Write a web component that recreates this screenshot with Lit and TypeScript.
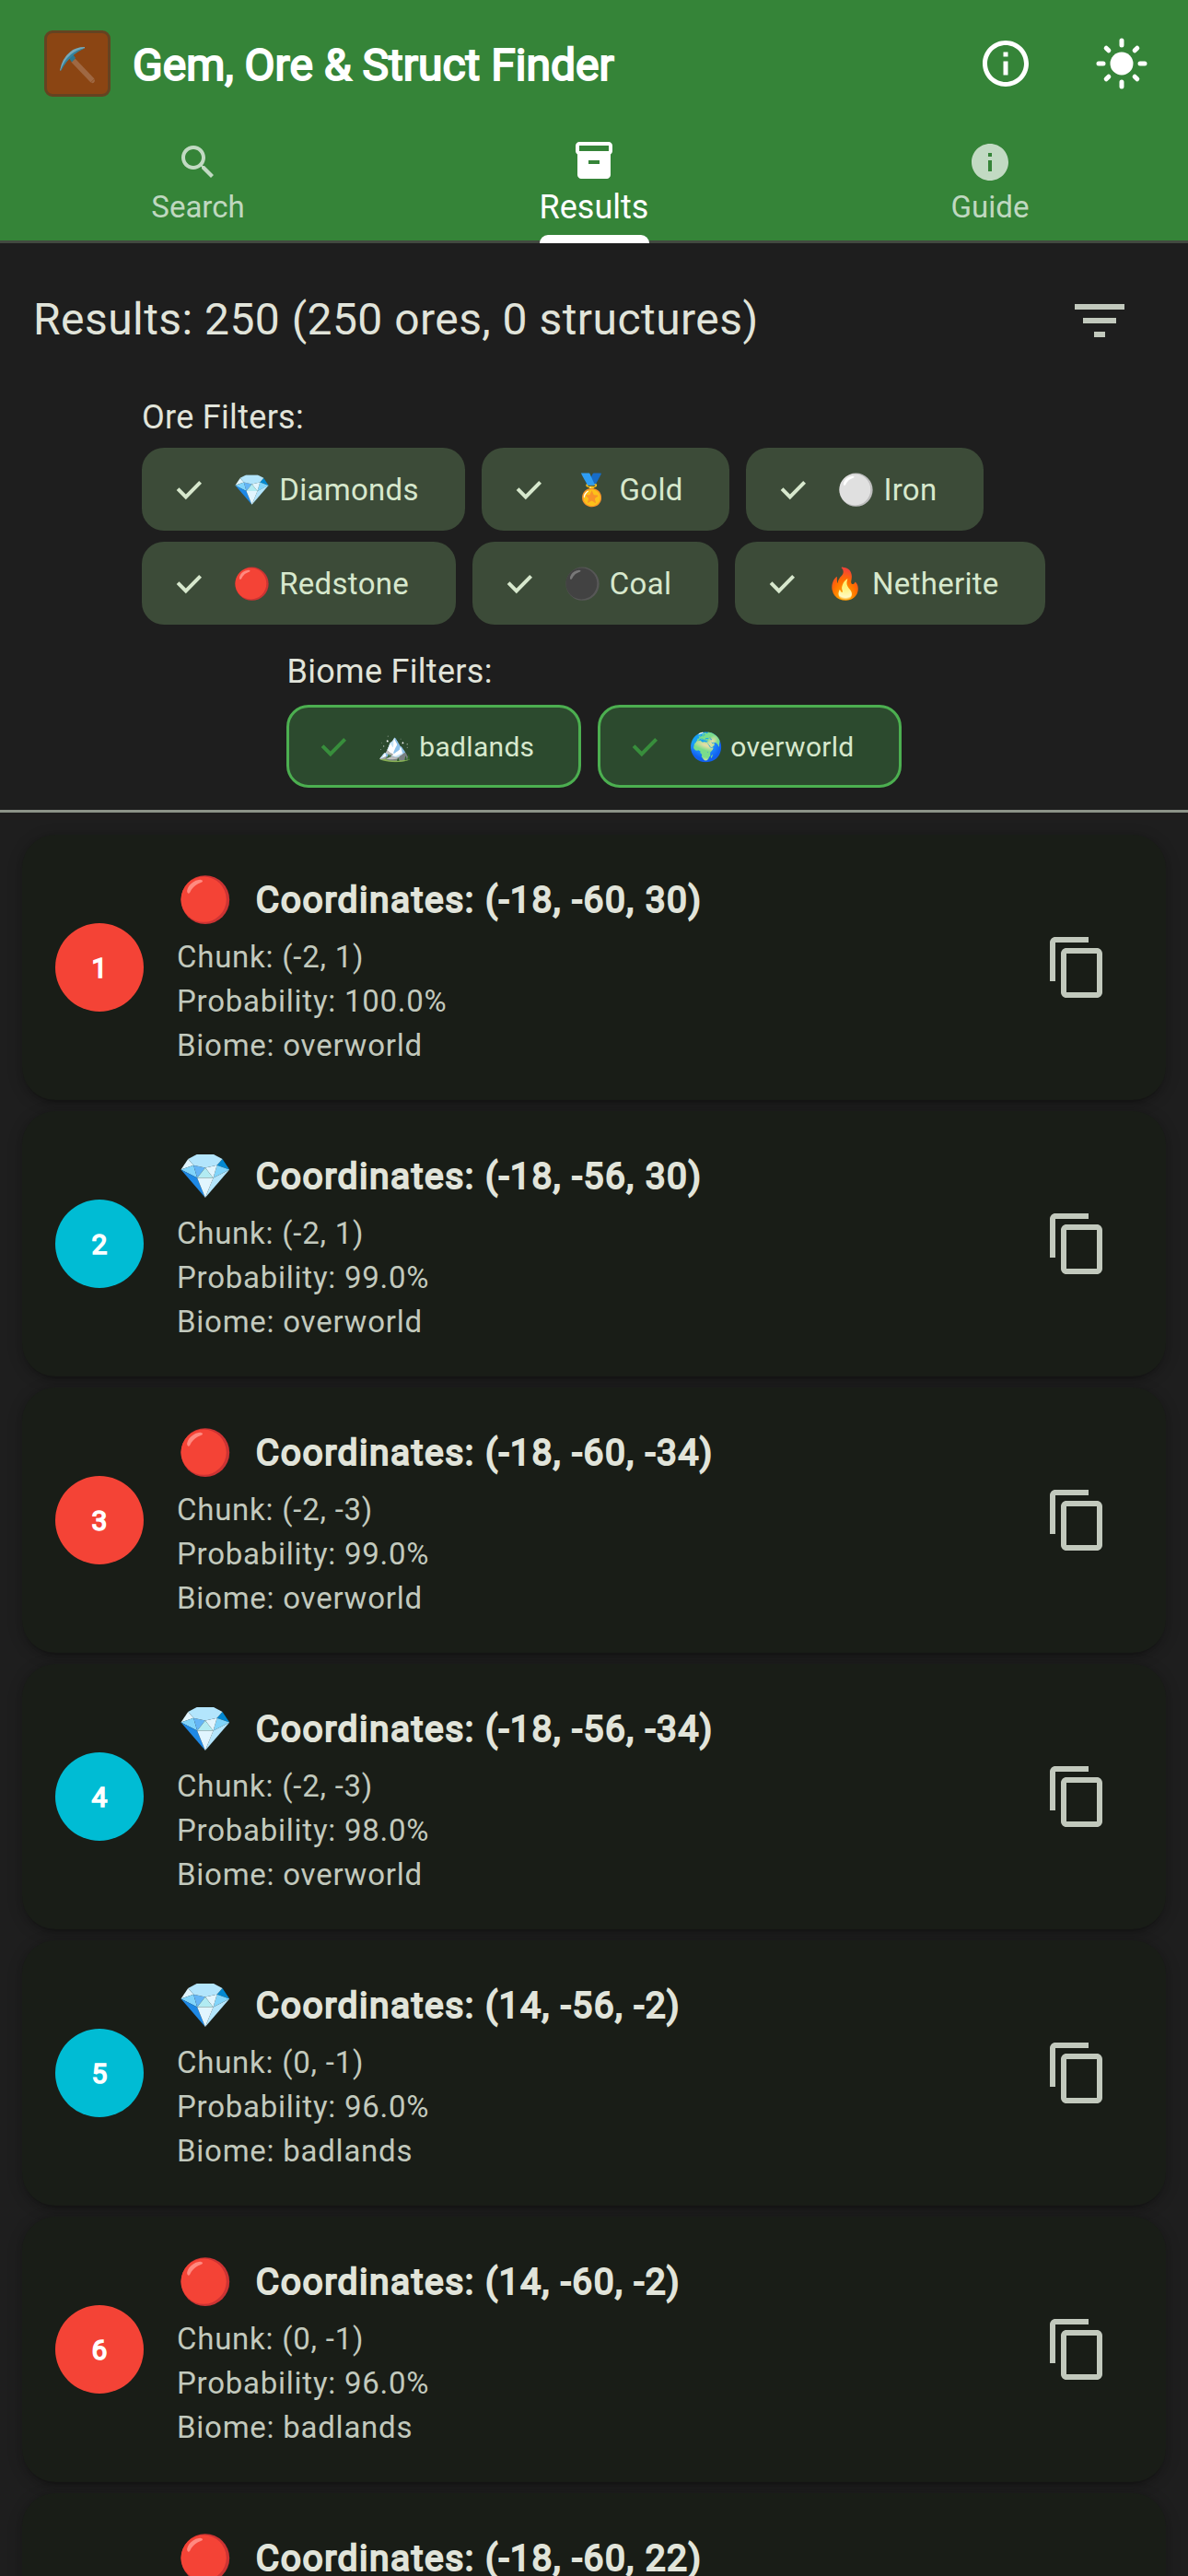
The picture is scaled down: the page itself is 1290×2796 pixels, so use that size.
import { LitElement, html, css, svg } from "lit";
import { customElement, property } from "lit/decorators.js";

interface Chip { emoji: string; label: string; }
interface Ore { n: number; kind: "redstone" | "diamond"; at: string; chunk: string; probability: string; biome: string; }

const ORES: Chip[] = [
  { emoji: "💎", label: "Diamonds" },
  { emoji: "🏅", label: "Gold" },
  { emoji: "⚪", label: "Iron" },
  { emoji: "🔴", label: "Redstone" },
  { emoji: "⚫", label: "Coal" },
  { emoji: "🔥", label: "Netherite" },
];
const BIOMES: Chip[] = [
  { emoji: "🏔️", label: "badlands" },
  { emoji: "🌍", label: "overworld" },
];
const RESULTS: Ore[] = [
  { n: 1, kind: "redstone", at: "(-18, -60, 30)", chunk: "(-2, 1)", probability: "100.0%", biome: "overworld" },
  { n: 2, kind: "diamond", at: "(-18, -56, 30)", chunk: "(-2, 1)", probability: "99.0%", biome: "overworld" },
  { n: 3, kind: "redstone", at: "(-18, -60, -34)", chunk: "(-2, -3)", probability: "99.0%", biome: "overworld" },
  { n: 4, kind: "diamond", at: "(-18, -56, -34)", chunk: "(-2, -3)", probability: "98.0%", biome: "overworld" },
  { n: 5, kind: "diamond", at: "(14, -56, -2)", chunk: "(0, -1)", probability: "96.0%", biome: "badlands" },
  { n: 6, kind: "redstone", at: "(14, -60, -2)", chunk: "(0, -1)", probability: "96.0%", biome: "badlands" },
  { n: 7, kind: "redstone", at: "(-18, -60, 22)", chunk: "(-2, 1)", probability: "96.0%", biome: "overworld" },
];

const ICONS = {
  search: svg`<path d="M15.5 14h-.79l-.28-.27C15.41 12.59 16 11.11 16 9.5 16 5.91 13.09 3 9.5 3S3 5.91 3 9.5 5.91 16 9.5 16c1.61 0 3.09-.59 4.23-1.57l.27.28v.79l5 4.99L20.49 19l-4.99-5zm-6 0C7.01 14 5 11.99 5 9.5S7.01 5 9.5 5 14 7.01 14 9.5 11.99 14 9.5 14z"/>`,
  results: svg`<path d="M20 2H4c-1 0-2 .9-2 2v3.01c0 .72.43 1.34 1 1.69V20c0 1.1 1.1 2 2 2h14c.9 0 2-.9 2-2V8.7c.57-.35 1-.97 1-1.69V4c0-1.1-1-2-2-2zm-5 12H9v-2h6v2zm5-7H4V4h16v3z"/>`,
  guide: svg`<path d="M12 2C6.48 2 2 6.48 2 12s4.48 10 10 10 10-4.48 10-10S17.52 2 12 2zm1 15h-2v-6h2v6zm0-8h-2V7h2v2z"/>`,
  info: svg`<path d="M11 7h2v2h-2zm0 4h2v6h-2zm1-9C6.48 2 2 6.48 2 12s4.48 10 10 10 10-4.48 10-10S17.52 2 12 2zm0 18c-4.41 0-8-3.59-8-8s3.59-8 8-8 8 3.59 8 8-3.59 8-8 8z"/>`,
  sun: svg`<circle cx="12" cy="12" r="5"/><path fill="none" stroke="currentColor" stroke-width="2" stroke-linecap="round" d="M2 12h2M20 12h2M12 2v2M12 20v2M5.28 5.28l1.06 1.06M17.66 17.66l1.06 1.06M18.72 5.28l-1.06 1.06M6.34 17.66l-1.06 1.06"/>`,
  filter: svg`<path d="M10 18h4v-2h-4v2zM3 6v2h18V6H3zm3 7h12v-2H6v2z"/>`,
  copy: svg`<path d="M16 1H4c-1.1 0-2 .9-2 2v14h2V3h12V1zm3 4H8c-1.1 0-2 .9-2 2v14c0 1.1.9 2 2 2h11c1.1 0 2-.9 2-2V7c0-1.1-.9-2-2-2zm0 16H8V7h11v14z"/>`,
};
const icon = (name: keyof typeof ICONS, cls: string) =>
  html`<svg class="icon ${cls}" viewBox="0 0 24 24" fill="currentColor">${ICONS[name]}</svg>`;

const iconStyles = css`
  .icon { display: block; flex: none; }
`;

@customElement("filter-chip")
class FilterChip extends LitElement {
  @property() emoji = "";
  @property() label = "";
  @property({ type: Boolean, reflect: true }) outlined = false;
  static styles = css`
    :host {
      box-sizing: border-box; display: flex; align-items: center; height: 90px; padding: 0 50.5px 0 36px;
      border-radius: 24px; background: #3c4b38; color: #d7e8cd; font-size: 33px; letter-spacing: 0.3px; white-space: pre;
    }
    :host([outlined]) { border: 3px solid #4caf50; background: #2c4a2e; font-size: 30px; padding: 0 48px 0 33px; }
    .check { width: 30px; height: 24px; margin-right: 33.3px; flex: none; stroke: #d7e8cd; }
    :host([outlined]) .check { stroke: #388e3c; margin-right: 32.5px; }
    :host([outlined]) .text { padding-top: 1px; }
  `;
  render() {
    return html`<svg class="check" viewBox="0 0 30 24" fill="none" stroke-width="4"><path d="M3.1 11.6 11.8 20.3 27.6 4.4"/></svg><span class="text">${this.emoji} ${this.label}</span>`;
  }
}

@customElement("result-card")
class ResultCard extends LitElement {
  @property({ attribute: false }) ore!: Ore;
  static styles = [iconStyles, css`
    :host {
      box-sizing: border-box; display: flex; align-items: center; height: 288px; padding: 0 60px 0 36px; flex: none;
      border-radius: 36px; background: #191d17; color: #c2c9bd;
      box-shadow: 0 6px 3px -3px rgba(0,0,0,.1), 0 3px 9px rgba(0,0,0,.12), 0 3px 18px rgba(0,0,0,.14);
    }
    .avatar { width: 96px; height: 96px; border-radius: 50%; display: flex; align-items: center; justify-content: center; color: #fff; font-size: 30px; -webkit-text-stroke: 1.6px #fff; }
    .redstone { background: #f44336; }
    .diamond { background: #00bcd4; }
    .body { flex: 1; margin-left: 36px; padding-top: 2px; }
    .title { display: flex; align-items: center; height: 67px; margin-bottom: 5px; gap: 25px; color: #e1e4da; }
    .emoji { font-size: 48px; line-height: 60px; margin-left: 1px; }
    .coords { font-size: 39px; letter-spacing: 1.5px; -webkit-text-stroke: 2px #e1e4da; }
    .line { font-size: 33px; line-height: 48px; letter-spacing: 0.75px; }
    .copy { width: 72px; height: 72px; }
  `];
  render() {
    const o = this.ore;
    return html`
      <div class="avatar ${o.kind}">${o.n}</div>
      <div class="body">
        <div class="title"><span class="emoji">${o.kind === "redstone" ? "🔴" : "💎"}</span><span class="coords">Coordinates: ${o.at}</span></div>
        <div class="line">Chunk: ${o.chunk}</div>
        <div class="line">Probability: ${o.probability}</div>
        <div class="line">Biome: ${o.biome}</div>
      </div>
      ${icon("copy", "copy")}`;
  }
}

@customElement("app-root")
class AppRoot extends LitElement {
  static styles = [iconStyles, css`
    :host { display: flex; flex-direction: column; height: 2796px; overflow: hidden; background: #1e1e1e; color: #e1e4da; font-family: Roboto, "Noto Color Emoji", sans-serif; }
    .header { box-sizing: border-box; height: 264px; flex: none; background: #358438; color: #fff; border-bottom: 3px solid #424940; }
    .bar { display: flex; align-items: center; height: 138px; padding: 0 42px 0 48px; }
    .logo { box-sizing: border-box; width: 72px; height: 72px; border: 3px solid #654321; border-radius: 9px; background: #8b4513; }
    .logo svg { display: block; width: 66px; height: 66px; }
    .app-title { flex: 1; margin-left: 24px; padding-top: 2px; font-size: 48px; -webkit-text-stroke: 2px #fff; }
    .action { width: 60px; height: 60px; margin-left: 66px; }
    .tabs { display: grid; grid-template-columns: repeat(3, 1fr); height: 123px; }
    .tab { display: flex; flex-direction: column; align-items: center; padding-top: 14px; font-size: 33px; line-height: 42px; color: rgba(255,255,255,.7); }
    .tab .glyph { width: 48px; height: 48px; margin-bottom: 4px; }
    .tab.selected { padding-top: 12px; font-size: 36px; line-height: 45px; color: #fff; }
    .tab.selected .glyph { margin-bottom: 5px; }
    .indicator { width: 119px; height: 9px; margin-top: 7px; border-radius: 9px 9px 0 0; background: #fff; z-index: 1; }
    .summary { display: flex; align-items: center; justify-content: space-between; height: 168px; padding: 0 60px 0 36px; font-size: 48px; letter-spacing: .45px; flex: none; }
    .summary-text { padding-bottom: 3px; }
    .filter { width: 72px; height: 72px; color: #c2c9bd; }
    .filters { display: flex; flex-direction: column; align-items: center; flex: none; height: 447px; border-bottom: 3px solid #8c9388; }
    .group-title { font-size: 36px; line-height: 42px; letter-spacing: .3px; }
    .group { display: flex; flex-direction: column; gap: 15px; }
    .ores { width: 988px; margin-right: -6px; padding-bottom: 30px; gap: 12px; }
    .chips { display: flex; flex-wrap: wrap; gap: 12px 18px; }
    .list { display: flex; flex-direction: column; gap: 12px; padding: 24px 24px 0; flex: 1; overflow: hidden; }
  `];
  private chips(items: Chip[], outlined: boolean) {
    return html`<div class="chips">${items.map((c) => html`<filter-chip .emoji=${c.emoji} .label=${c.label} ?outlined=${outlined}></filter-chip>`)}</div>`;
  }
  render() {
    return html`
      <div class="header">
        <div class="bar">
          <div class="logo"><svg viewBox="0 0 66 66">
            <path d="M28.5 29.5 49.5 51.5" stroke="#9f6843" stroke-width="5.6"/>
            <path d="M48 53.5 51.5 50 52 52Q51 54.5 49 54.3Z" fill="#9f6843"/>
            <path d="M23.5 26.5 28 22.5 31 27 27 31.5Z" fill="#2b7890"/>
            <path d="M14 40.5Q16.5 27 25 20.5 31 15 41 15V16.2Q33 18.5 27.5 23.5 19 30.5 15 40.5Z" fill="#74a9bb"/>
            <path d="M14.6 40.5Q18.5 29.5 26 23 32 18 41 16.2 34 19.5 28.5 24 20.5 30.5 15.4 40.5Z" fill="#36839c"/>
          </svg></div>
          <div class="app-title">Gem, Ore &amp; Struct Finder</div>
          ${icon("info", "action")}${icon("sun", "action")}
        </div>
        <div class="tabs">
          <div class="tab">${icon("search", "glyph")}Search</div>
          <div class="tab selected">${icon("results", "glyph")}Results<div class="indicator"></div></div>
          <div class="tab">${icon("guide", "glyph")}Guide</div>
        </div>
      </div>
      <div class="summary"><span class="summary-text">Results: 250 (250 ores, 0 structures)</span>${icon("filter", "filter")}</div>
      <div class="filters">
        <div class="group ores"><div class="group-title">Ore Filters:</div>${this.chips(ORES, false)}</div>
        <div class="group"><div class="group-title">Biome Filters:</div>${this.chips(BIOMES, true)}</div>
      </div>
      <div class="list">${RESULTS.map((o) => html`<result-card .ore=${o}></result-card>`)}</div>`;
  }
}
